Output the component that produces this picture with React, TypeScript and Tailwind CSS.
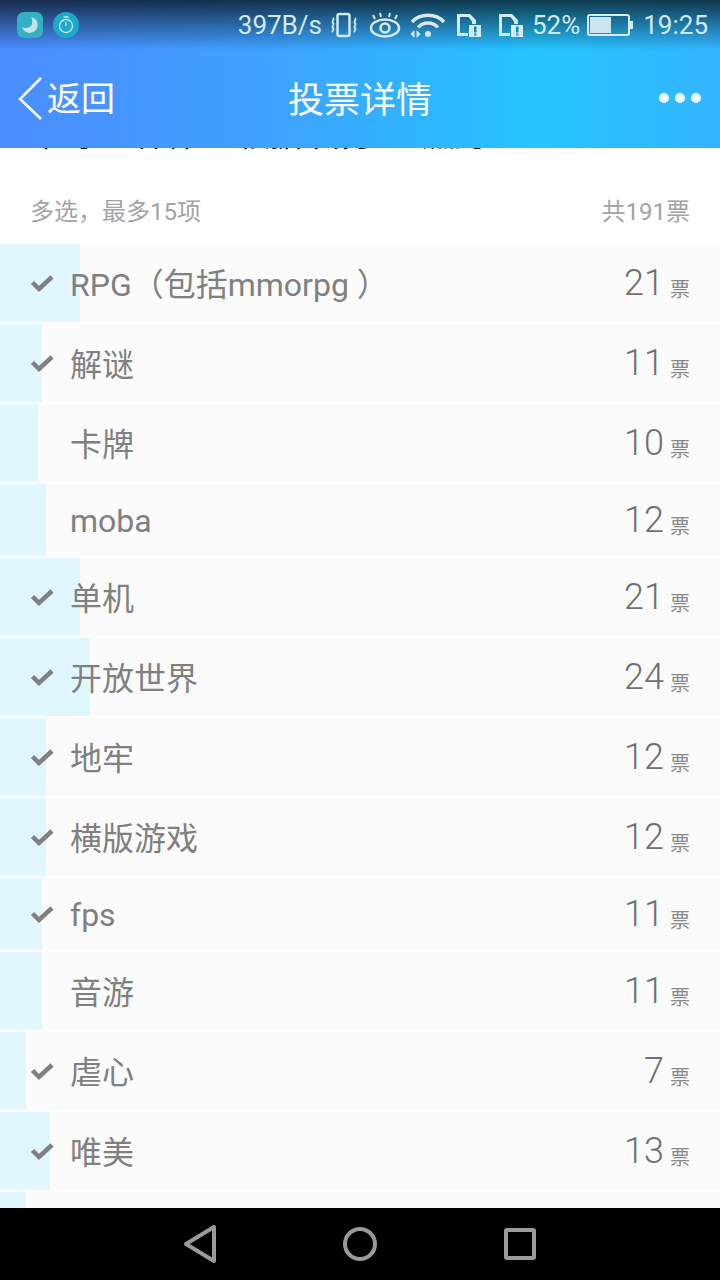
const font = { fontFamily: 'Roboto, "Noto Sans CJK SC", sans-serif' };

const options = [
  { label: 'RPG（包括mmorpg ）', votes: 21, bar: 80, picked: true, h: 'h-[78px]', nudge: 'mt-[4px]' },
  { label: '解谜', votes: 11, bar: 42, picked: true, h: 'h-[78px]', nudge: 'mt-[4px]' },
  { label: '卡牌', votes: 10, bar: 38, picked: false, h: 'h-[78px]', nudge: 'mt-[4px]' },
  { label: 'moba', votes: 12, bar: 46, picked: false, h: 'h-[72px]', nudge: 'mt-[2px]' },
  { label: '单机', votes: 21, bar: 80, picked: true, h: 'h-[78px]', nudge: 'mt-[4px]' },
  { label: '开放世界', votes: 24, bar: 90, picked: true, h: 'h-[78px]', nudge: 'mt-[4px]' },
  { label: '地牢', votes: 12, bar: 46, picked: true, h: 'h-[78px]', nudge: 'mt-[4px]' },
  { label: '横版游戏', votes: 12, bar: 46, picked: true, h: 'h-[78px]', nudge: 'mt-[4px]' },
  { label: 'fps', votes: 11, bar: 42, picked: true, h: 'h-[72px]', nudge: 'mt-[2px]' },
  { label: '音游', votes: 11, bar: 42, picked: false, h: 'h-[78px]', nudge: 'mt-[4px]' },
  { label: '虐心', votes: 7, bar: 26, picked: true, h: 'h-[78px]', nudge: 'mt-[4px]' },
  { label: '唯美', votes: 13, bar: 50, picked: true, h: 'h-[78px]', nudge: 'mt-[4px]' },
];

function Check() {
  return (
    <svg width="24" height="20" viewBox="0 0 24 20" className="shrink-0">
      <path d="M2.500 9.500 L9 16 L22 4" fill="none" stroke="#808080" strokeWidth="4.500" />
    </svg>
  );
}

function SimAlert() {
  return (
    <svg width="26" height="24" viewBox="0 0 26 24" className="shrink-0" fill="#d4ecf6">
      <path fillRule="evenodd" d="M1 1h13l6 6v4h-4V8.500L12.500 4H4v16h8v3H1z" />
      <path fillRule="evenodd" d="M13 12h12v12H13zM18 13.500v6h2.500v-6zM18 20.500v2h2.500v-2z" />
    </svg>
  );
}

function StatusBar() {
  return (
    <div className="flex h-[50px] items-center justify-between pl-[17px] pr-[12px] text-[26px] text-[#cfe9f5]">
      <div className="flex items-center gap-[10px]">
        <div className="flex h-[26px] w-[26px] items-center justify-center rounded-[7px] bg-[#33b0c2]">
          <svg width="18" height="18" viewBox="0 0 18 18">
            <path d="M10 1a8 8 0 1 1-9 10c3 2 9 1 10-3 .6-2.500.3-5-1-7z" fill="#c3e2ea" />
          </svg>
        </div>
        <div className="flex h-[26px] w-[26px] items-center justify-center rounded-full bg-[#1fa9c9]">
          <svg width="16" height="18" viewBox="0 0 16 18" fill="none" stroke="#c6eaf2" strokeWidth="1.300">
            <circle cx="8" cy="10" r="6.500" />
            <path d="M5.500 1h5M8 10V6" />
          </svg>
        </div>
      </div>
      <div className="flex items-center">
        <span className="mr-[9px]">397B/s</span>
        <svg width="26" height="26" viewBox="0 0 26 26" fill="none" stroke="#cfe9f5" strokeWidth="2.500" className="mr-[12px]">
          <rect x="6.500" y="2" width="12" height="22" rx="2" />
          <path d="M2 6c2 2-2 3 0 5s-2 3 0 5 -2 3 0 4M24 6c2 2-2 3 0 5s-2 3 0 5-2 3 0 4" strokeWidth="1.800" />
        </svg>
        <svg width="32" height="26" viewBox="0 0 32 26" fill="none" stroke="#d8e8ec" strokeWidth="2.500" className="mr-[9px]">
          <ellipse cx="16" cy="16" rx="14" ry="8.500" />
          <circle cx="16" cy="16" r="4.500" />
          <path d="M6 7 4 3M12 5l-1-4M20 5l1-4M26 7l2-4" strokeWidth="2" />
        </svg>
        <svg width="36" height="26" viewBox="0 0 36 26" fill="none" stroke="#d8e8ec" className="mr-[10px]">
          <path d="M2 10C10 1 26 1 34 10" strokeWidth="3.500" />
          <path d="M8 15.500C13 9.500 23 9.500 28 15.500" strokeWidth="3.500" />
          <circle cx="18" cy="22" r="3" fill="#d8e8ec" stroke="none" />
          <path d="M4.500 18 .5 22l4 4zM6.500 18l4 4-4 4z" fill="#d8e8ec" stroke="none" />
        </svg>
        <SimAlert />
        <div className="w-[16px]" />
        <SimAlert />
        <span className="ml-[8px] mr-[7px]">52%</span>
        <svg width="46" height="24" viewBox="0 0 46 24" className="mr-[10px]">
          <rect x="1" y="2" width="41" height="20" rx="2" fill="none" stroke="#d4ecf6" strokeWidth="2" />
          <rect x="3" y="4" width="21" height="16" fill="#c9e4ee" />
          <rect x="43" y="8" width="3" height="8" fill="#d4ecf6" />
        </svg>
        <span>19:25</span>
      </div>
    </div>
  );
}

export default function App() {
  return (
    <div className="flex h-[1280px] w-[720px] flex-col overflow-hidden bg-white" style={font}>
      <header className="relative h-[148px] shrink-0 bg-[linear-gradient(90deg,#4c8dff_0%,#3fa0ff_35%,#25c4ff_75%,#33b5ff_100%)]">
        <div className="absolute inset-x-0 top-0 h-[50px] bg-gradient-to-b from-black/70 to-transparent" />
        <div className="relative">
          <StatusBar />
          <div className="relative flex h-[98px] items-center justify-center pt-[4px] text-white">
            <div className="absolute left-[18px] top-[26px] flex items-start">
              <svg width="26" height="44" viewBox="0 0 26 44" fill="none" stroke="#fff" strokeWidth="2.500">
                <path d="M23 2 2 23l21 20" />
              </svg>
              <span className="ml-[3px] mt-[1px] text-[34px] leading-[44px]">返回</span>
            </div>
            <span className="text-[36px] leading-[44px]">投票详情</span>
            <div className="absolute right-[19px] top-[43px] flex gap-[6px]">
              <div className="h-[10px] w-[10px] rounded-full bg-[#eef9ff]" />
              <div className="h-[10px] w-[10px] rounded-full bg-[#eef9ff]" />
              <div className="h-[10px] w-[10px] rounded-full bg-[#eef9ff]" />
            </div>
          </div>
        </div>
      </header>

      <main className="min-h-0 flex-1 overflow-hidden">
        {/* question title scrolled under the header, only its last pixels show */}
        <div className="h-[4px] overflow-hidden px-[30px] text-[32px] leading-[40px] text-black">
          <p className="-mt-[33px] whitespace-nowrap">平时 一种什么 根据 自身 一 燃的</p>
        </div>
        <div className="flex h-[92px] items-end justify-between px-[30px] pb-[16px] text-[24px] leading-[32px] text-[#a3a3a3]">
          <span>多选，最多15项</span>
          <span>共191票</span>
        </div>
        <div className="flex flex-col gap-[2px]">
          {options.map((o) => (
            <div key={o.label} className={`relative flex shrink-0 items-center bg-[#fbfbfb] pr-[30px] ${o.h}`}>
              <div className="absolute inset-y-0 left-0 bg-[#e0f7ff]" style={{ width: o.bar }} />
              <div className="relative ml-[30px] w-[40px] shrink-0">{o.picked && <Check />}</div>
              <span className={`relative flex-1 text-[32px] leading-[40px] text-[#808080] ${o.nudge}`}>{o.label}</span>
              <span className="relative text-[36px] font-light leading-[40px] text-[#707070]">{o.votes}</span>
              <span className="relative ml-[6px] mt-[14px] text-[20px] leading-[24px] text-[#8a8a8a]">票</span>
            </div>
          ))}
          {/* next option, cut off by the nav bar */}
          <div className="relative h-[78px] shrink-0 bg-[#fbfbfb]">
            <div className="absolute inset-y-0 left-0 w-[26px] bg-[#e0f7ff]" />
          </div>
        </div>
      </main>

      <nav className="flex h-[72px] shrink-0 items-center justify-center bg-black">
        <div className="flex w-[160px] justify-center">
          <svg width="40" height="40" viewBox="0 0 40 40" fill="none" stroke="#9a9a9a" strokeWidth="4" strokeLinejoin="round">
            <path d="M34 3v34L6 20z" />
          </svg>
        </div>
        <div className="flex w-[160px] justify-center">
          <svg width="36" height="36" viewBox="0 0 36 36" fill="none" stroke="#9a9a9a" strokeWidth="4">
            <circle cx="18" cy="18" r="15" />
          </svg>
        </div>
        <div className="flex w-[160px] justify-center">
          <svg width="32" height="32" viewBox="0 0 32 32" fill="none" stroke="#9a9a9a" strokeWidth="4" strokeLinejoin="round">
            <rect x="2" y="2" width="28" height="28" rx="1" />
          </svg>
        </div>
      </nav>
    </div>
  );
}
